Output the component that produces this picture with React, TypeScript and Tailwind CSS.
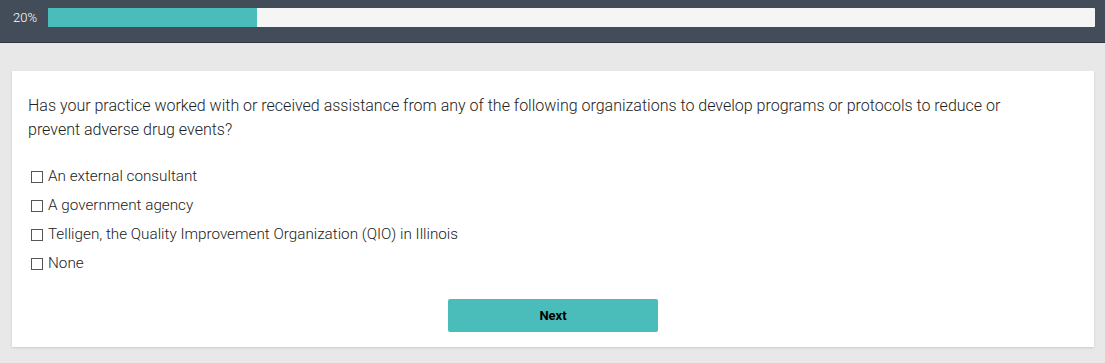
const options = [
  'An external consultant',
  'A government agency',
  'Telligen, the Quality Improvement Organization (QIO) in Illinois',
  'None',
]

export default function App() {
  const progress = 20

  return (
    <div className="min-h-[363px] bg-[#e8e8e8] font-['Roboto',sans-serif]">
      {/* progress header */}
      <div className="flex h-[43px] items-start border-b border-[#2f3742] bg-[#434d5a] pt-2 pr-[10px]">
        <span className="w-[48px] pl-[13px] text-[13px] font-light leading-[19px] text-white">{progress}%</span>
        <div className="h-[19px] flex-1 rounded-[1px] bg-[#f5f5f5]">
          <div className="h-full bg-[#4abdba]" style={{ width: `${progress}%` }} />
        </div>
      </div>

      {/* question card */}
      <div className="mx-[12px] mt-[28px] mr-[11px] bg-white px-4 pt-[23px] pb-[15px] shadow-[0_1px_2px_rgba(0,0,0,0.12)]">
        <p className="max-w-[1010px] text-[16px] font-light leading-[24px] text-[#222]">
          Has your practice worked with or received assistance from any of the following organizations to develop programs or protocols to reduce or
          prevent adverse drug events?
        </p>

        <div className="mt-[20px] flex flex-col">
          {options.map((o) => (
            <label key={o} className="flex h-[29px] items-center gap-[5px] pl-[3px] text-[15.25px] font-light text-[#222]">
              <span className="h-[12px] w-[12px] border border-[#555] bg-white" />
              {o}
            </label>
          ))}
        </div>

        <div className="mt-[21px] flex justify-center">
          <button className="h-[33px] w-[210px] rounded-[2px] bg-[#4abdba] text-[13px] font-bold text-black">Next</button>
        </div>
      </div>
    </div>
  )
}
